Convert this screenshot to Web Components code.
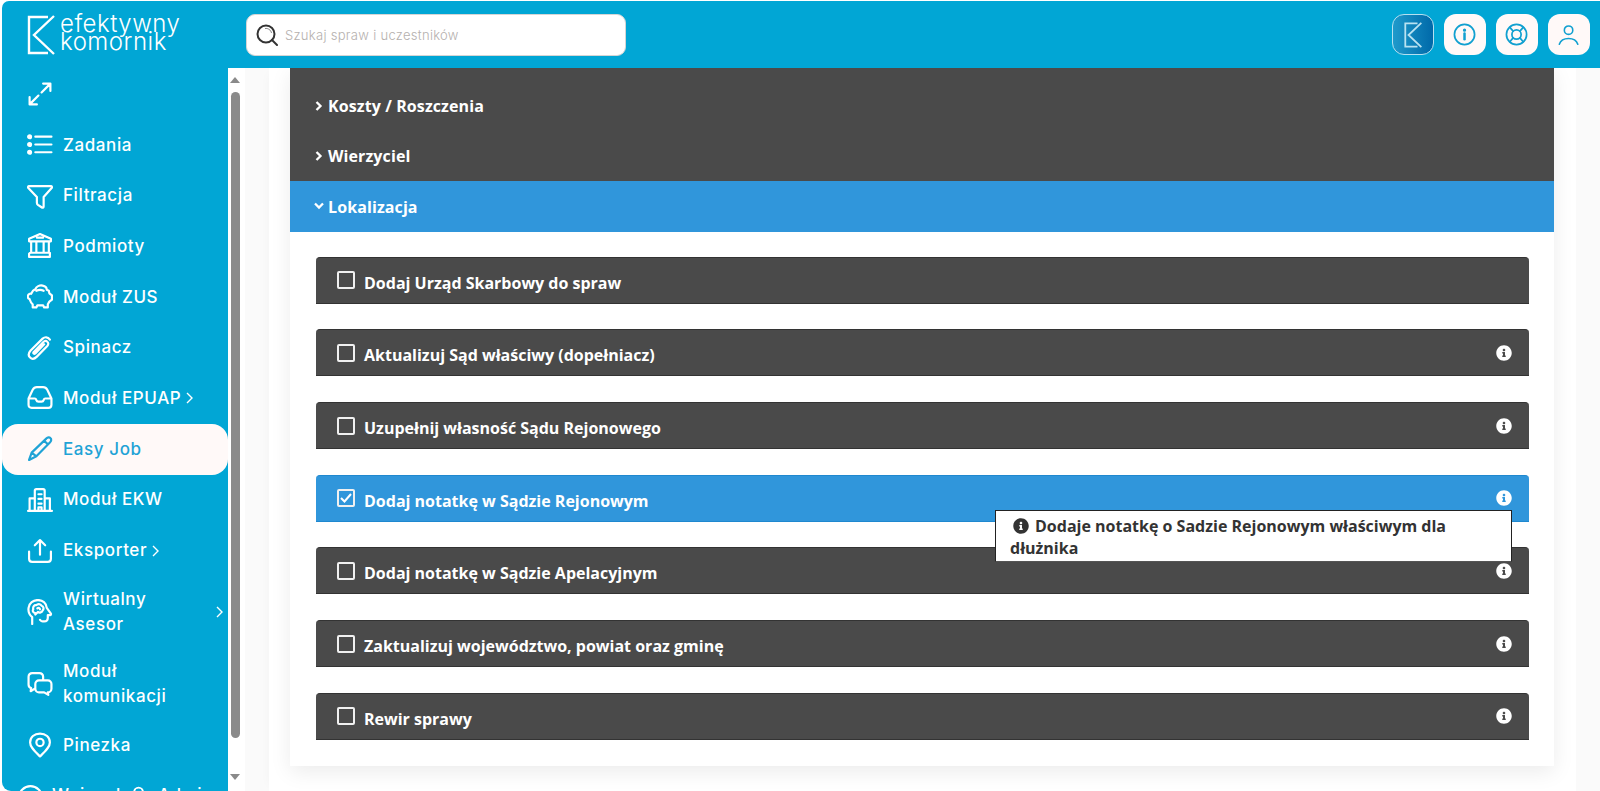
<!DOCTYPE html>
<html lang="pl">
<head>
<meta charset="utf-8">
<title>efektywny komornik</title>
<style>
  html, body { margin: 0; height: 100%; overflow: hidden; background: #fff; font-family: "Open Sans", sans-serif; }
</style>
</head>
<body>
<app-shell>
  <top-bar slot="top"></top-bar>
  <side-nav slot="nav">
    <nav-item icon="expand"></nav-item>
    <nav-item icon="list">Zadania</nav-item>
    <nav-item icon="filter">Filtracja</nav-item>
    <nav-item icon="bank">Podmioty</nav-item>
    <nav-item icon="piggy">Moduł ZUS</nav-item>
    <nav-item icon="clip">Spinacz</nav-item>
    <nav-item icon="inbox" more>Moduł EPUAP</nav-item>
    <nav-item icon="pen" active>Easy Job</nav-item>
    <nav-item icon="city">Moduł EKW</nav-item>
    <nav-item icon="upload" more>Eksporter</nav-item>
    <nav-item icon="brain" tall more="far">Wirtualny<br>Asesor</nav-item>
    <nav-item icon="chat" tall>Moduł<br>komunikacji</nav-item>
    <nav-item icon="pin">Pinezka</nav-item>
    <nav-pair></nav-pair>
  </side-nav>
  <acc-panel>
    <acc-head slot="head" stub></acc-head>
    <acc-head slot="head">Koszty / Roszczenia</acc-head>
    <acc-head slot="head">Wierzyciel</acc-head>
    <acc-head slot="head" open>Lokalizacja</acc-head>
    <action-row>Dodaj Urząd Skarbowy do spraw</action-row>
    <action-row info>Aktualizuj Sąd właściwy (dopełniacz)</action-row>
    <action-row info>Uzupełnij własność Sądu Rejonowego</action-row>
    <action-row info checked>Dodaj notatkę w Sądzie Rejonowym
      <info-tip slot="tip">Dodaje notatkę o Sadzie Rejonowym właściwym dla dłużnika</info-tip>
    </action-row>
    <action-row info>Dodaj notatkę w Sądzie Apelacyjnym</action-row>
    <action-row info>Zaktualizuj województwo, powiat oraz gminę</action-row>
    <action-row info>Rewir sprawy</action-row>
  </acc-panel>
</app-shell>

<script>
/* icons for the side menu and the top bar, 25x25 stroke */
const ICONS = {
  expand: '<path d="M14 11 22 3M15.500 2.500H22.500V9.500M11 14 3 22M2.500 15.500V22.500H9.500"/>',
  list: '<path d="M8 4.500H23.500M8 12H23.500M8 19.500H23.500"/><circle cx="2.500" cy="4.500" r="1.400" fill="currentColor"/><circle cx="2.500" cy="12" r="1.400" fill="currentColor"/><circle cx="2.500" cy="19.500" r="1.400" fill="currentColor"/>',
  filter: '<path d="M2 3H23C24 3 24.300 4 23.700 4.800L16 13.500V22.500C16 23.800 15 24 14 23.300L10.500 21C9.700 20.400 9.500 20 9.500 19V13.500L1.300 4.800C.7 4 1 3 2 3Z"/>',
  bank: '<path d="M12.500 1 23 5.500V8H2V5.500ZM4 8V19M9 8V19M16 8V19M21 8V19M3 19H22V23H2V20ZM9.500 4.500H15.500"/>',
  piggy: '<path d="M8 5C9 2.500 12 1 15 1.500 18 2 19 4 19 5.500L21 6.500 21.500 9 24 11V15L21.500 17 20 19.500V22.500H16.500L15.500 20.500H10L9 22.500H5.500V19.500C3.500 18 3 16 2.500 14.500 1 14 .3 12.500 1 11 1.500 9.500 3 9 4 9.500 5 7 6.500 5.500 8 5ZM9 6.500C11 5.500 14 5.500 16 6.500"/>',
  clip: '<path d="M22 4.500C20 1.500 17 1.700 15 3.500L3.500 15C1 17.800 1.200 20 3 21.700 4.800 23.500 7.300 23 9.500 20.800L19.500 10.500C21 8.800 20.500 7.300 19.500 6.500 18.500 5.500 17 5.500 15.500 7L6.500 16.300C5.500 17.500 6.800 18.800 8 17.800L16.500 9"/>',
  inbox: '<path d="M1.500 13 5.500 4.500C6.300 3 7.500 2 9.500 2H15.500C17.500 2 18.700 3 19.500 4.500L23.500 13V19C23.500 21 22.500 22 20.500 22H4.500C2.500 22 1.500 21 1.500 19ZM1.500 13H7.500C8.500 13 8.700 13.500 9 14.500 9.300 15.500 10 16 11 16H14C15 16 15.700 15.500 16 14.500 16.300 13.500 16.500 13 17.500 13H23.500"/>',
  pen: '<path d="M18.500 2.500C20 1 21.500 1 22.500 2 23.700 3 23.500 4.800 22 6.300L9 19.500 2 23 4.500 16ZM16.500 4.500 20 8M4.500 16 9 19.500"/>',
  city: '<path d="M7.500 22V3.500C7.500 2.300 8 2 9 2H15.500C16.500 2 17 2.300 17 3.500V22M1 23H24M2.500 22V11H7.500M17 11H22V22M11 7H14M11 11.500H14M11 16H14M11 22V19.500H14V22"/>',
  upload: '<path d="M12.500 16V2M7.500 7 12.500 2 17.500 7M2 13V20C2 22 3 23 5 23H20C22 23 23 22 23 20V13"/>',
  brain: '<path d="M5 24V17.500C2 15 1 12 1.500 8.500 2 4 6 1 10.500 1 15 1 18.500 4 19 8.500L23 14C23.300 14.800 23 15.300 22 15.500H20V18C20 20.500 18.500 21.500 16.500 21.500H15C13.500 21.500 13 20.500 12.500 20M6 10C5.500 7.500 7 5.500 9 6 10 4.500 13 4.500 14 6.500 16 7 16.500 9.500 15 11 14.500 13 12 13.500 10.500 12.500L8 15M6 10C5 11.500 6 13.500 8 13.500M10 9C11 8 12.500 8.500 12.500 10"/>',
  chat: '<path d="M15.500 9V5.500C15.500 3.500 14 2 12 2H5C3 2 1.500 3.500 1.500 5.500V13C1.500 15 2.500 16 4 16.500L3.500 19.500 7.500 17M11.500 9H20C22 9 23.500 10.500 23.500 12.500V17C23.500 19 22 20.500 20 20.500L20.500 23 16.500 20.500H11.500C9.500 20.500 8 19 8 17V12.500C8 10.500 9.500 9 11.500 9Z"/>',
  pin: '<path d="M12.500 23.500C7 18 3 14.500 3 10 3 5 7 1.500 12.500 1.500 18 1.500 22 5 22 10 22 14.500 18 18 12.500 23.500Z"/><circle cx="12.500" cy="10" r="3.500"/>',
  circle: '<circle cx="12" cy="14" r="11"/>',
  person: '<circle cx="12" cy="8" r="5"/><path d="M3 24C3 18 7 15 12 15S21 18 21 24"/>',
  info: '<circle cx="12" cy="12" r="10.500"/><path d="M12 11V17" stroke-width="2.600"/><circle cx="12" cy="7.500" r=".8" fill="currentColor"/>',
  ring: '<circle cx="12" cy="12" r="10.500"/><circle cx="12" cy="12" r="4.800"/><path d="M5 4.500 8.500 8.500M19 4.500 15.500 8.500M5 19.500 8.500 15.500M19 19.500 15.500 15.500"/>',
  user: '<circle cx="12" cy="7" r="4.800"/><path d="M1.500 23C3 18.500 7 16.500 12 16.500S21 18.500 22.500 23"/>'
};
const svgIcon = (name, size, sw) => `<svg viewBox="0 0 25 25" width="${size}" height="${size}" fill="none" stroke="currentColor" stroke-width="${sw}" stroke-linecap="round" stroke-linejoin="round">${ICONS[name]}</svg>`;
const INFO_SOLID = '<svg viewBox="0 0 512 512" width="16" height="16" fill="currentColor"><path d="M256 8C119 8 8 119 8 256c0 137 111 248 248 248s248-111 248-248C504 119 393 8 256 8zm0 110c23 0 42 19 42 42s-19 42-42 42-42-19-42-42 19-42 42-42zm56 254c0 7-5 12-12 12h-88c-7 0-12-5-12-12v-24c0-7 5-12 12-12h12v-64h-12c-7 0-12-5-12-12v-24c0-7 5-12 12-12h64c7 0 12 5 12 12v100h12c7 0 12 5 12 12v24z"/></svg>';
const K_MARK = '<path d="M21 2H2V38H21M27 1 7 20 27 39"/>';
const NAV_FONT = '"Inter", "Liberation Sans", sans-serif';

function tpl(html) {
  const t = document.createElement('template');
  t.innerHTML = html;
  return t;
}

const shellTpl = tpl(`
  <style>
    :host { display: grid; grid-template-columns: 226px 17px 1fr; grid-template-rows: 67px 723px; height: 791px; padding: 1px 0 0 2px; box-sizing: border-box; overflow: hidden; }
    .top { grid-column: 1 / 4; }
    .bar { background: #fff; position: relative; }
    .thumb { position: absolute; left: 3px; right: 5px; top: 24px; height: 646px; background: #8a8a8a; border-radius: 5px; }
    .up, .down { position: absolute; left: 2px; border: 5.500px solid transparent; }
    .up { top: 9px; border-top: 0; border-bottom: 6px solid #8a8a8a; }
    .down { top: 706px; border-bottom: 0; border-top: 6px solid #8a8a8a; }
  </style>
  <div class="top"><slot name="top"></slot></div>
  <slot name="nav"></slot>
  <div class="bar"><div class="up"></div><div class="thumb"></div><div class="down"></div></div>
  <slot></slot>
`);
class AppShell extends HTMLElement {
  constructor() {
    super();
    this.attachShadow({ mode: 'open' }).appendChild(shellTpl.content.cloneNode(true));
  }
}
customElements.define('app-shell', AppShell);

const topTpl = tpl(`
  <style>
    :host { display: flex; align-items: center; height: 67px; background: #01a6d5; border-top-left-radius: 7px; padding: 0 10px 0 25px; box-sizing: border-box; }
    .logo { display: flex; align-items: center; gap: 5px; width: 219px; color: #fff; }
    .logo svg { flex: none; }
    .name { font: 300 24px/18.500px "Inter", "Liberation Sans", sans-serif; letter-spacing: .5px; margin-top: -3px; }
    .search { width: 380px; height: 42px; display: flex; align-items: center; gap: 7px; padding-left: 9px; box-sizing: border-box; background: #fff; border: 1px solid #d5d5d5; border-radius: 9px; color: #333; }
    .search span { font: 300 13px "Inter", "Liberation Sans", sans-serif; color: #b5b0ae; letter-spacing: .3px; }
    .btns { margin-left: auto; display: flex; gap: 10px; }
    .btn { width: 42px; height: 41px; box-sizing: border-box; border-radius: 12px; background: #fff9f8; color: #11a0d0; display: flex; align-items: center; justify-content: center; }
    .brand { background: linear-gradient(90deg, #1f9acb, #0069a9); border: 1px solid #b5e0f0; color: #b9e2f1; }
  </style>
  <div class="logo">
    <svg width="28" height="40" viewBox="0 0 28 40" fill="none" stroke="currentColor" stroke-width="2.400">${K_MARK}</svg>
    <div class="name">efektywny<br>komornik</div>
  </div>
  <div class="search">
    <svg width="22" height="22" viewBox="0 0 22 22" fill="none" stroke="currentColor" stroke-width="2"><circle cx="10" cy="10" r="8.500"/><path d="M16 16 21 21" stroke-linecap="round"/><path d="M9 4.500C12 4 15 6 15.500 9" stroke-width="1" opacity=".6"/></svg>
    <span>Szukaj spraw i uczestników</span>
  </div>
  <div class="btns">
    <div class="btn brand"><svg width="18" height="26" viewBox="0 0 28 40" fill="none" stroke="currentColor" stroke-width="2.800">${K_MARK}</svg></div>
    <div class="btn">${svgIcon('info', 24, 1.800)}</div>
    <div class="btn">${svgIcon('ring', 24, 1.800)}</div>
    <div class="btn">${svgIcon('user', 22, 1.800)}</div>
  </div>
`);
class TopBar extends HTMLElement {
  constructor() {
    super();
    this.attachShadow({ mode: 'open' }).appendChild(topTpl.content.cloneNode(true));
  }
}
customElements.define('top-bar', TopBar);

const navTpl = tpl(`
  <style>
    :host { display: block; background: #01a6d5; border-bottom-left-radius: 9px; overflow: hidden; padding-top: 1px; box-sizing: border-box; height: 723px; }
  </style>
  <slot></slot>
`);
class SideNav extends HTMLElement {
  constructor() {
    super();
    this.attachShadow({ mode: 'open' }).appendChild(navTpl.content.cloneNode(true));
  }
}
customElements.define('side-nav', SideNav);

class NavItem extends HTMLElement {
  constructor() {
    super();
    this.attachShadow({ mode: 'open' });
  }
  connectedCallback() {
    const more = this.getAttribute('more');
    const chev = '<svg class="chev" width="7" height="12" viewBox="0 0 7 12" fill="none" stroke="currentColor" stroke-width="1.400"><path d="M1 1 6 6 1 11"/></svg>';
    this.shadowRoot.innerHTML = `
      <style>
        :host { display: flex; align-items: center; height: 50.700px; padding-left: 25px; box-sizing: border-box; color: #fff; font: 500 17px/25px ${NAV_FONT}; letter-spacing: .6px; }
        :host([tall]) { height: 72px; }
        :host([active]) { background: #fff9f8; color: #1fa3d6; border-radius: 16px; }
        .ic { flex: none; width: 26px; height: 26px; margin-right: 10px; }
        .chev { flex: none; margin-left: 5px; }
        :host([more="far"]) .chev { margin-left: auto; margin-right: 5px; }
      </style>
      <span class="ic">${svgIcon(this.getAttribute('icon'), 26, 2.100)}</span>
      <span><slot></slot></span>
      ${more !== null ? chev : ''}`;
  }
}
customElements.define('nav-item', NavItem);

const pairTpl = tpl(`
  <style>
    :host { display: flex; align-items: center; height: 50px; color: #fff; font: 500 17px/25px ${NAV_FONT}; letter-spacing: .6px; padding-left: 16px; }
    span { display: flex; align-items: center; gap: 8px; flex: none; }
    .a { width: 110px; }
    svg { flex: none; }
  </style>
  <span class="a">${svgIcon('circle', 26, 2.100)}<b style="font-weight:500;width:76px;overflow:visible">Wniosek</b></span>
  <span>${svgIcon('person', 22, 2.100)}Admin</span>
`);
class NavPair extends HTMLElement {
  constructor() {
    super();
    this.attachShadow({ mode: 'open' }).appendChild(pairTpl.content.cloneNode(true));
  }
}
customElements.define('nav-pair', NavPair);

const panelTpl = tpl(`
  <style>
    :host { display: block; background: #fafafa; padding-right: 24px; padding-left: 24px; overflow: hidden; height: 723px; box-sizing: border-box; }
    .card { background: #fff; height: 100%; padding: 0 22px 0 21px; box-shadow: -6px 0 10px -6px rgba(0,0,0,.03); }
    .inner { background: #fff; box-shadow: 0 6px 20px rgba(0,0,0,.08); }
    .body { padding: 25px 25px .400px 26px; }
  </style>
  <div class="card">
    <div class="inner">
      <slot name="head"></slot>
      <div class="body"><slot></slot></div>
    </div>
  </div>
`);
class AccPanel extends HTMLElement {
  constructor() {
    super();
    this.attachShadow({ mode: 'open' }).appendChild(panelTpl.content.cloneNode(true));
  }
}
customElements.define('acc-panel', AccPanel);

class AccHead extends HTMLElement {
  constructor() {
    super();
    this.attachShadow({ mode: 'open' });
  }
  connectedCallback() {
    const open = this.hasAttribute('open');
    const d = open ? 'M1 1.500 5 5.500 9 1.500' : 'M2.500 1 6.500 5 2.500 9';
    this.shadowRoot.innerHTML = `
      <style>
        :host { display: flex; align-items: center; height: 50.600px; padding: 1px 0 0 24px; box-sizing: border-box; background: #4a4a4a; color: #fff; font: 700 16px "Open Sans", sans-serif; letter-spacing: .1px; }
        :host([open]) { background: #3096db; }
        :host([stub]) { height: 12px; }
        svg { margin-right: 4px; }
      </style>
      ${this.hasAttribute('stub') ? '' : `<svg width="10" height="10" viewBox="0 0 10 10" fill="none" stroke="currentColor" stroke-width="2.300"><path d="${d}"/></svg>`}
      <slot></slot>`;
  }
}
customElements.define('acc-head', AccHead);

class ActionRow extends HTMLElement {
  constructor() {
    super();
    this.attachShadow({ mode: 'open' });
  }
  connectedCallback() {
    const checked = this.hasAttribute('checked');
    this.shadowRoot.innerHTML = `
      <style>
        :host { display: flex; align-items: center; position: relative; height: 47px; margin-bottom: 25.660px; padding: 0 17px 0 21px; box-sizing: border-box; background: #4a4a4a; color: #fff; border-radius: 4px 4px 0 0; border-top: 1px solid #333; border-bottom: 1px solid #333; font: 700 16px "Open Sans", sans-serif; }
        :host([checked]) { background: #3096db; border-color: #1f88cf; }
        .box { flex: none; width: 18px; height: 18px; box-sizing: border-box; border: 2px solid #f0f0f0; border-radius: 2px; margin-right: 9px; display: flex; align-items: center; justify-content: center; }
        .txt { padding-top: 5px; }
        .i { margin-left: auto; display: flex; }
      </style>
      <span class="box">${checked ? '<svg width="12" height="10" viewBox="0 0 12 10" fill="none" stroke="#fff" stroke-width="2"><path d="M1 5 4.500 8.500 11 1"/></svg>' : ''}</span>
      <span class="txt"><slot></slot></span>
      ${this.hasAttribute('info') ? `<span class="i">${INFO_SOLID}</span>` : ''}
      <slot name="tip"></slot>`;
  }
}
customElements.define('action-row', ActionRow);

const tipTpl = tpl(`
  <style>
    :host { display: block; position: absolute; z-index: 5; top: 34px; right: 17px; width: 517px; height: 52px; box-sizing: border-box; padding: 4px 14px 0 14px; background: #fff; border: 1px solid #222; border-bottom-color: #555; color: #333; font: 700 16px/22px "Open Sans", sans-serif; }
    svg { vertical-align: -2px; margin: 0 6px 0 3px; }
  </style>
  ${INFO_SOLID}<slot></slot>
`);
class InfoTip extends HTMLElement {
  constructor() {
    super();
    this.attachShadow({ mode: 'open' }).appendChild(tipTpl.content.cloneNode(true));
  }
}
customElements.define('info-tip', InfoTip);
</script>
</body>
</html>
